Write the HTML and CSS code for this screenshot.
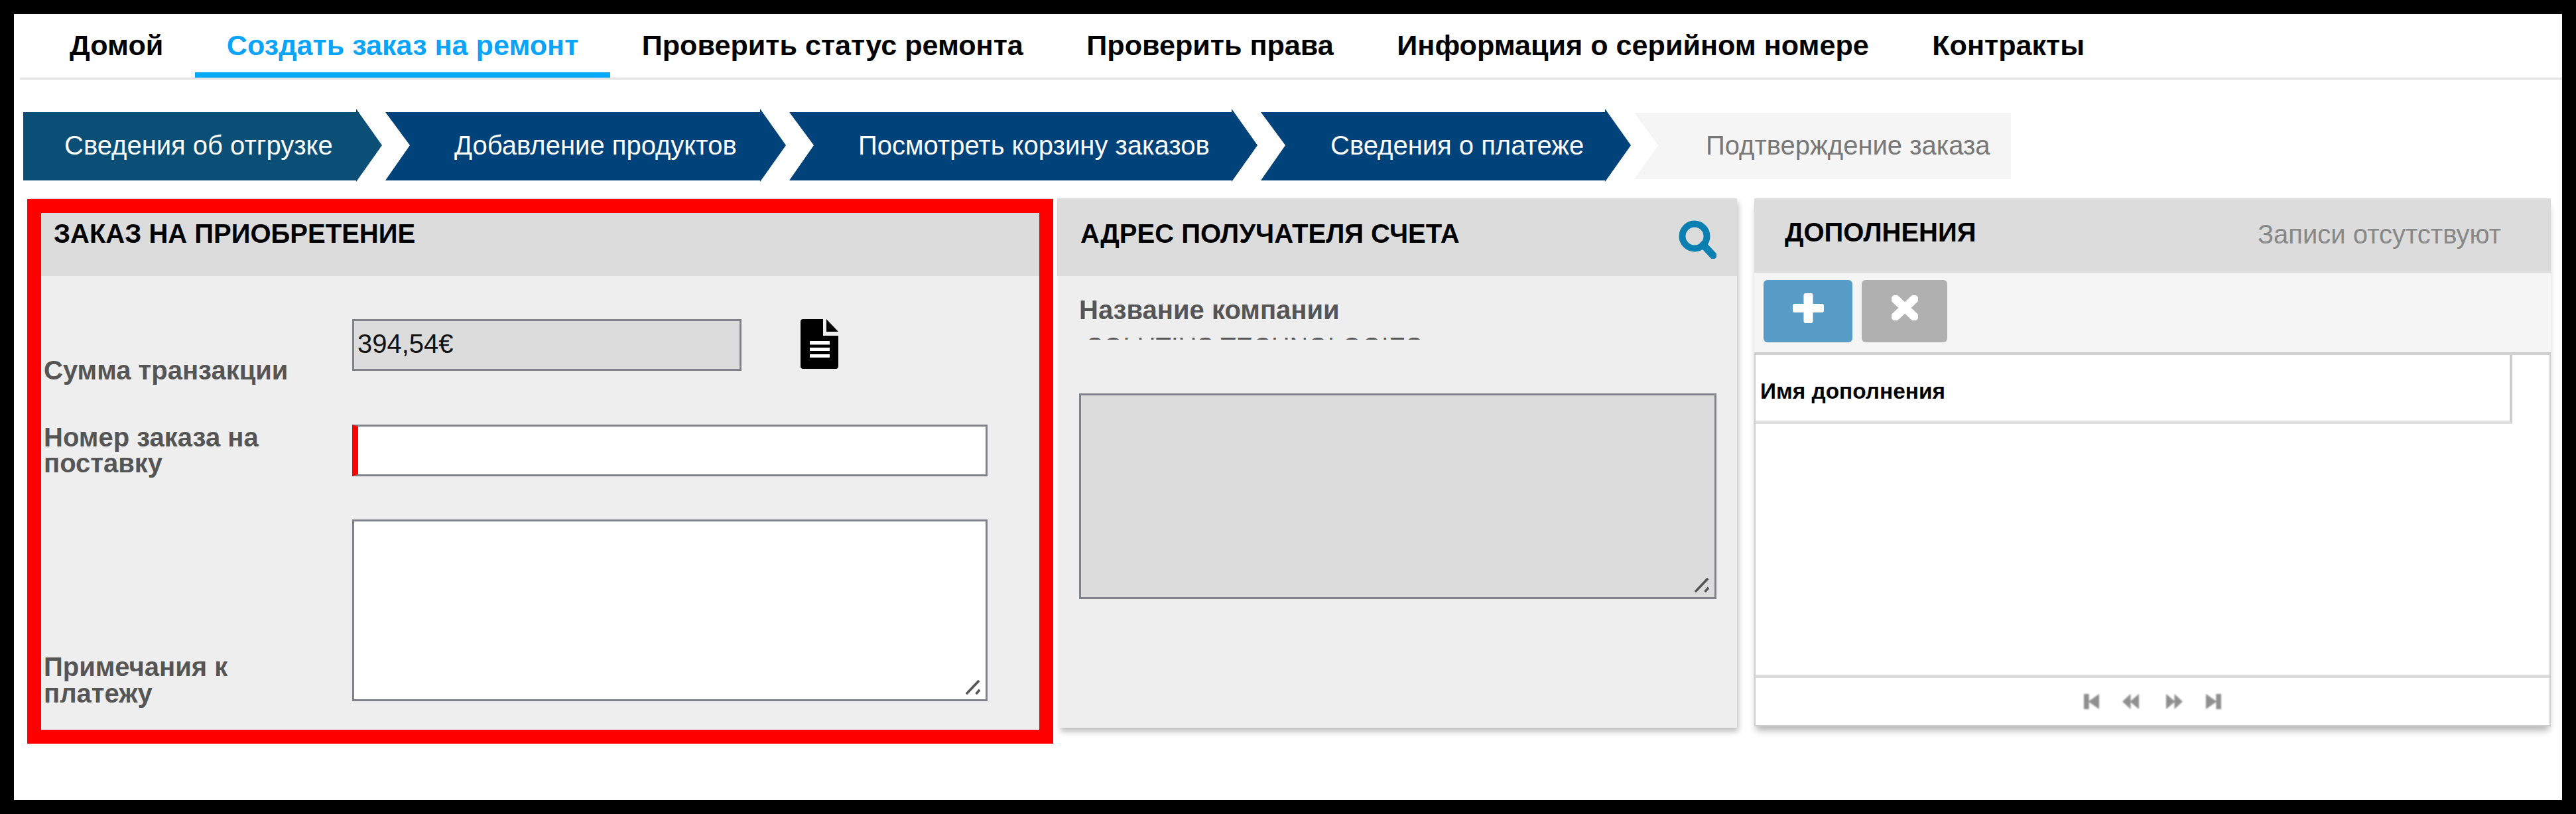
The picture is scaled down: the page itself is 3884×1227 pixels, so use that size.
FILE: index.html
```html
<!DOCTYPE html>
<html lang="ru">
<head>
<meta charset="utf-8">
<title>Создать заказ на ремонт</title>
<link rel="stylesheet" href="styles.css">
</head>
<body>
<div class="frame">
  <nav class="tabs">
    <a class="tab tab-home">Домой</a>
    <a class="tab tab-active">Создать заказ на ремонт</a>
    <a class="tab">Проверить статус ремонта</a>
    <a class="tab">Проверить права</a>
    <a class="tab">Информация о серийном номере</a>
    <a class="tab">Контракты</a>
  </nav>
  <div class="steps">
    <div class="step step-first"><span>Сведения об отгрузке</span></div>
    <div class="step step-2"><span>Добавление продуктов</span></div>
    <div class="step step-3"><span>Посмотреть корзину заказов</span></div>
    <div class="step step-4"><span>Сведения о платеже</span></div>
    <div class="step step-last"><span>Подтверждение заказа</span></div>
  </div>
  <div class="panels">
    <section class="panel panel-order">
      <header class="panel-head panel-head-tall"><h2>ЗАКАЗ НА ПРИОБРЕТЕНИЕ</h2></header>
      <div class="order-body">
        <div class="row row-amount">
          <label class="lbl">Сумма транзакции</label>
          <div class="field field-ro">394,54€</div>
          <svg class="doc-icon" viewBox="0 0 57 75" aria-hidden="true"><path d="M4 0H34V25H57V71a4 4 0 0 1-4 4H4a4 4 0 0 1-4-4V4a4 4 0 0 1 4-4Z" fill="#000"/><path d="M39 0 57 19H39Z" fill="#000"/><path d="M14 33H44V38.500H14ZM14 43H44V48H14ZM14 53H44V58H14Z" fill="#fff"/></svg>
        </div>
        <div class="row row-po">
          <label class="lbl">Номер заказа на поставку</label>
          <div class="field field-req"></div>
        </div>
        <div class="row row-notes">
          <label class="lbl">Примечания к платежу</label>
          <div class="area">
            <svg class="grip" viewBox="0 0 24 24" aria-hidden="true"><path d="M1 23 22 1M17 23 23 16" stroke="#555" stroke-width="4" fill="none"/></svg>
          </div>
        </div>
      </div>
      <div class="red-mark"></div>
    </section>
    <section class="panel panel-addr">
      <header class="panel-head panel-head-tall panel-head-addr"><h2>АДРЕС ПОЛУЧАТЕЛЯ СЧЕТА</h2>
        <svg class="search" viewBox="0 0 57 58" aria-hidden="true"><circle cx="24" cy="24" r="18.5" fill="none" stroke="#0b7fb0" stroke-width="10"/><path d="M37 37 52 53" stroke="#0b7fb0" stroke-width="11" stroke-linecap="round"/></svg>
      </header>
      <div class="addr-body">
        <div class="lbl">Название компании</div>
        <div class="clipped"><span>SOLUTIUS TECHNOLOGIES</span></div>
        <div class="area area-ro">
          <svg class="grip" viewBox="0 0 24 24" aria-hidden="true"><path d="M1 23 22 1M17 23 23 16" stroke="#555" stroke-width="4" fill="none"/></svg>
        </div>
      </div>
    </section>
    <section class="panel panel-add">
      <header class="panel-head panel-head-add"><h2>ДОПОЛНЕНИЯ</h2><span class="empty">Записи отсутствуют</span></header>
      <div class="toolbar">
        <button class="btn btn-add" aria-label="Добавить"><svg viewBox="0 0 47 45"><path d="M16.500 3a3 3 0 0 1 3-3h8a3 3 0 0 1 3 3V16H44a3 3 0 0 1 3 3v7a3 3 0 0 1-3 3H30.500V42a3 3 0 0 1-3 3h-8a3 3 0 0 1-3-3V29H3a3 3 0 0 1-3-3V19a3 3 0 0 1 3-3H16.500Z" fill="#fff"/></svg></button>
        <button class="btn btn-del" aria-label="Удалить"><svg viewBox="0 0 40 38"><path d="M6 6 34 32M34 6 6 32" stroke="#fff" stroke-width="13" stroke-linecap="round" fill="none"/></svg></button>
      </div>
      <div class="grid">
        <div class="grid-head"><div class="grid-th">Имя дополнения</div></div>
        <div class="grid-body"></div>
        <div class="pager">
          <svg class="pg" viewBox="0 0 24 24"><path d="M0 0H8V24H0ZM24 0V24L7 12Z" fill="#8f8f8f"/></svg>
          <svg class="pg" viewBox="0 0 26 24"><path d="M13 0V24L0 12ZM26 0V24L12 12Z" fill="#8f8f8f"/></svg>
          <svg class="pg pg-next" viewBox="0 0 26 24"><path d="M13 0V24L26 12ZM0 0V24L14 12Z" fill="#8f8f8f"/></svg>
          <svg class="pg" viewBox="0 0 24 24"><path d="M24 0H16V24H24ZM0 0V24L17 12Z" fill="#8f8f8f"/></svg>
        </div>
      </div>
    </section>
  </div>
</div>
</body>
</html>
```
FILE: styles.css
```css
* { box-sizing: border-box; }
html, body { margin: 0; padding: 0; background: #000; }
body { width: 3884px; height: 1227px; font-family: "Liberation Sans", Arial, sans-serif; }
.frame { width: 3884px; height: 1227px; border: 21px solid #000; border-radius: 12px; background: #fff; overflow: hidden; }

.tabs { display: flex; height: 99px; margin-left: 9px; border-bottom: 3px solid #e2e2e2; }
.tab { display: block; height: 96px; padding: 24px 47.750px 0; font-size: 43.150px; line-height: 46px; font-weight: 700; color: #000; white-space: nowrap; }
.tab-home { margin-left: 27.250px; }
.tab-active { color: #0aa5fb; border-bottom: 8px solid #00a8ff; }

.steps { display: flex; margin: 44px 0 0 14px; height: 110px; align-items: center; }
.step { height: 110px; display: flex; align-items: center; color: #fff; font-size: 40px; background: #00437b; white-space: nowrap; margin-right: 5px;
  clip-path: polygon(0 5px, calc(100% - 39px) 5px, calc(100% - 39px) 0, 100% 55px, calc(100% - 39px) 110px, calc(100% - 39px) 108px, 0 108px, 37px 55px); }
.step-first { width: 541px; padding-left: 62px; background: #0b4f77; clip-path: polygon(0 5px, calc(100% - 39px) 5px, calc(100% - 39px) 0, 100% 55px, calc(100% - 39px) 110px, calc(100% - 39px) 108px, 0 108px); }
.step-2 { width: 604px; padding-left: 104px; }
.step-3 { width: 706px; padding-left: 104px; }
.step-4 { width: 558px; padding-left: 105px; }
.step-last { width: 568px; padding-left: 108px; margin: 0; color: #777; background: #f5f5f5; clip-path: polygon(0 6px, 100% 6px, 100% 106px, 0 106px, 36px 55px); }

.panels { display: flex; margin-top: 25px; height: 812px; align-items: flex-start; }
.panel { position: relative; background: #eee; }
.panel-head { height: 112px; background: #dcdcdc; display: flex; }
.panel-head-tall { height: 117px; }
.panel-head h2 { margin: 0; font-size: 40px; line-height: 44px; font-weight: 700; color: #000; }
.lbl { font-size: 40px; line-height: 39px; font-weight: 700; color: #555; }

.panel-order { width: 1542px; height: 801px; margin-left: 25px; }
.panel-order .panel-head { padding: 31px 0 0 35px; }
.order-body { padding: 65px 0 0 20px; }
.row { display: flex; width: 1423px; }
.row .lbl { width: 465px; flex: none; }
.row-amount { height: 78px; align-items: flex-start; }
.row-amount .lbl { margin-top: 58px; white-space: nowrap; }
.field { width: 587px; height: 78px; border: 3px solid #7f8389; font-size: 40px; line-height: 68px; padding-left: 5px; color: #111; }
.field-ro { background: #dcdcdc; }
.field-req { width: 958px; background: #fff; border-left: 9px solid #f00; }
.doc-icon { width: 57px; height: 75px; margin-left: 89px; flex: none; }
.row-po { margin-top: 81px; }
.row-po .lbl { padding-right: 100px; }
.row-notes { margin-top: 65px; height: 274px; align-items: flex-end; }
.row-notes .lbl { padding-right: 100px; line-height: 40px; margin-bottom: -8px; }
.area { position: relative; width: 958px; height: 274px; background: #fff; border: 3px solid #7f8389; flex: none; }
.grip { position: absolute; right: 8px; bottom: 7px; width: 22px; height: 22px; }
.red-mark { position: absolute; left: -5px; top: 1px; right: 0; bottom: -21px; border: 21px solid #f00; }

.panel-addr { width: 1022px; height: 798px; margin-left: 9px; box-shadow: 2px 6px 8px rgba(0,0,0,.25); }
.panel-head-addr { justify-content: space-between; margin-left: -3px; padding: 31px 31px 0 35px; }
.search { width: 57px; height: 58px; margin-top: 2px; }
.addr-body { padding: 32px 30px 0 30px; }
.clipped { height: 3px; margin-top: 22px; overflow: hidden; }
.clipped span { display: block; margin: -6px 0 0 11px; font-size: 38px; line-height: 40px; letter-spacing: .25px; color: #555; white-space: nowrap; }
.area-ro { width: 961px; height: 310px; margin-top: 81px; background: #dcdcdc; }

.panel-add { width: 1201px; height: 796px; margin-left: 26px; background: #fff; box-shadow: 0 9px 10px -3px rgba(0,0,0,.3); }
.panel-head-add { justify-content: space-between; padding: 29px 75px 0 46px; }
.empty { margin-top: 2px; font-size: 40px; line-height: 46px; color: #888; }
.toolbar { height: 120px; background: #f5f5f5; display: flex; padding: 11px 0 0 14px; gap: 14px; }
.btn { display: flex; align-items: center; justify-content: center; height: 94px; padding: 0; border: 0; border-radius: 6px; }
.btn-add { width: 134px; background: #589dc8; }
.btn-add svg { width: 47px; height: 45px; margin-top: -9px; }
.btn-del { width: 129px; background: #b0b0b0; }
.btn-del svg { width: 40px; height: 38px; margin-top: -10px; }
.grid { height: 564px; border: solid #cfcfcf; border-width: 4px 2px 2px; display: flex; flex-direction: column; }
.grid-head { height: 104px; flex: none; }
.grid-th { width: 1141px; height: 104px; border-right: 4px solid #ccc; border-bottom: 5px solid #e0e0e0; padding: 35px 0 0 7px; font-size: 33.400px; line-height: 40px; font-weight: 700; color: #000; }
.grid-body { flex: 1; }
.pager { height: 76px; flex: none; border-top: 5px solid #dcdcdc; display: flex; justify-content: center; align-items: center; gap: 34px; }
.pg { width: 25px; height: 23px; filter: blur(1px); }
.pg-next { margin-left: 7px; }
```
